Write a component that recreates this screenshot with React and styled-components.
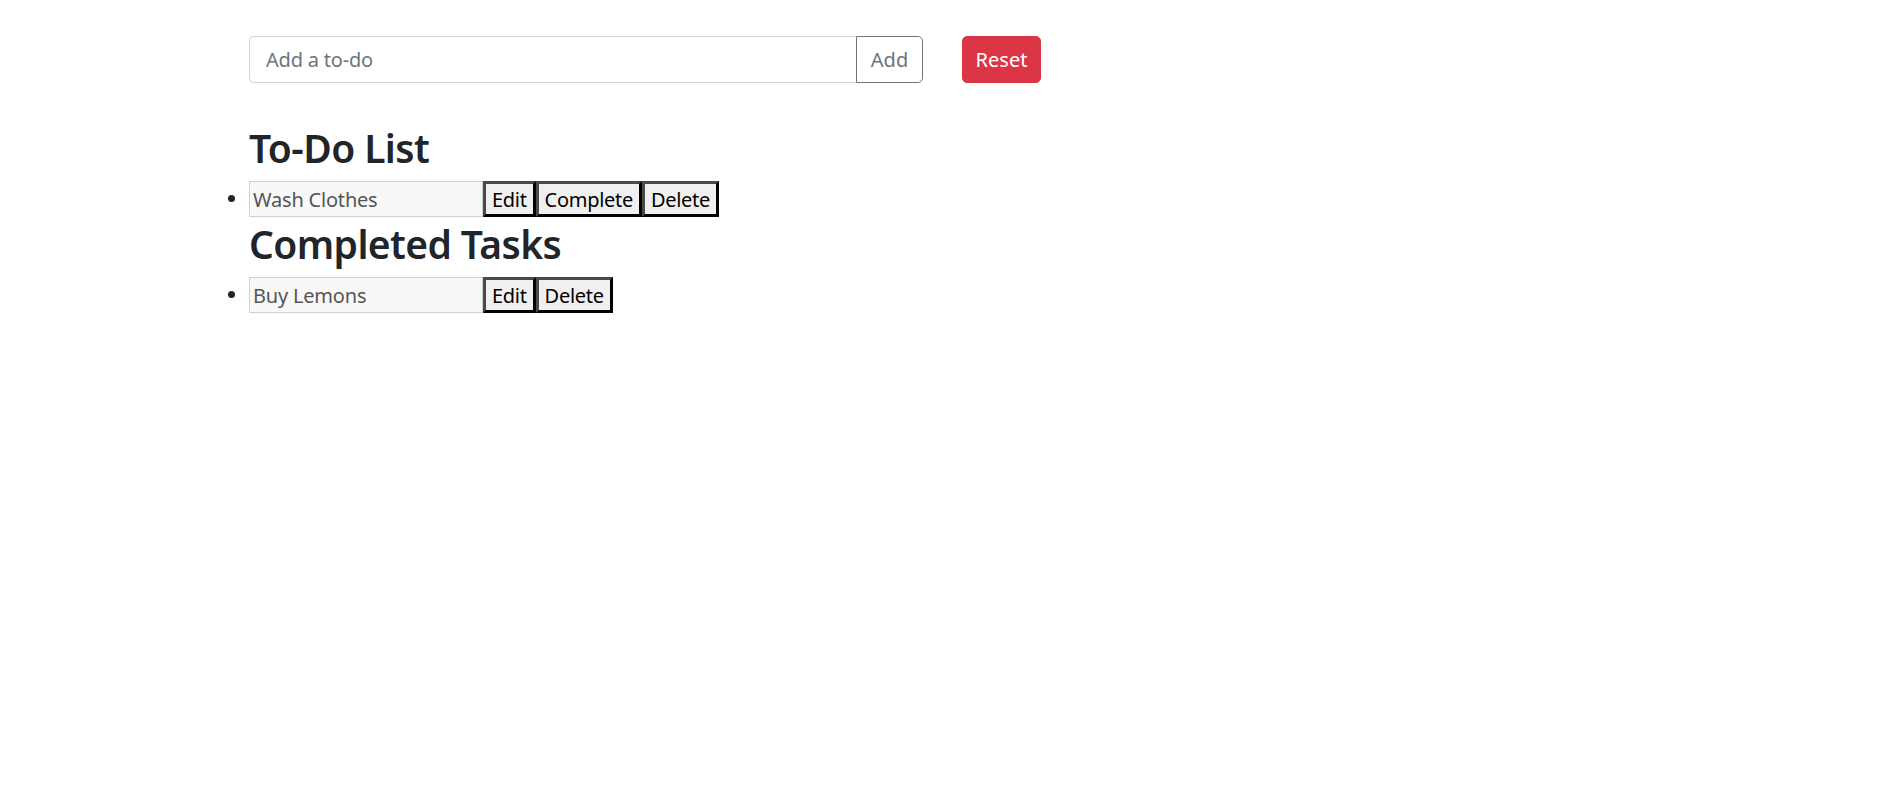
import React from 'react';
import styled, { createGlobalStyle } from 'styled-components';

const GlobalStyle = createGlobalStyle`
    body {
        margin: 0;
        background: #FFFFFF;
        font-family: "Noto Sans", "Open Sans", sans-serif;
        font-size: 20px;
        color: #212529;
    }
`;

const Page = styled.div`
    padding: 36px 0 0 249px;
`;

const Toolbar = styled.form`
    display: flex;
    align-items: stretch;
    height: 47px;
`;

const InputGroup = styled.div`
    display: flex;
    width: 674px;
`;

const TodoInput = styled.input`
    flex: 1;
    min-width: 0;
    box-sizing: border-box;
    padding: 7px 16px;
    font-family: inherit;
    font-size: 20px;
    letter-spacing: -0.2px;
    color: #212529;
    border: 1px solid #ced4da;
    border-right: none;
    border-radius: 5px 0 0 5px;
    outline: none;
    &::placeholder {
        color: #6c757d;
    }
`;

const AddButton = styled.button`
    box-sizing: border-box;
    width: 67px;
    padding: 0;
    font-family: inherit;
    font-size: 20px;
    color: #6c757d;
    background: transparent;
    border: 1px solid #6c757d;
    border-radius: 0 5px 5px 0;
    cursor: pointer;
`;

const ResetButton = styled.button`
    box-sizing: border-box;
    width: 79px;
    margin-left: 39px;
    padding: 0;
    font-family: inherit;
    font-size: 20px;
    color: #FFFFFF;
    background: #dc3545;
    border: 1px solid #dc3545;
    border-radius: 5px;
    cursor: pointer;
`;

const SectionTitle = styled.h2`
    margin: ${({ $gap }) => $gap}px 0 9px;
    font-size: 39px;
    font-weight: 600;
    line-height: 48px;
    letter-spacing: -0.6px;
    color: #212529;
`;

const TaskList = styled.ul`
    margin: 0;
    padding: 0;
    list-style: disc outside;
`;

const TaskItem = styled.li`
    height: 36px;
    line-height: 36px;
`;

const TaskRow = styled.div`
    display: inline-flex;
    vertical-align: top;
    height: 36px;
`;

const TaskText = styled.input`
    box-sizing: border-box;
    width: 234px;
    height: 36px;
    padding: 1px 3px;
    font-family: inherit;
    font-size: 20px;
    letter-spacing: -0.2px;
    color: #555555;
    background: #f8f8f8;
    border: 1px solid #d0d0d0;
    outline: none;
`;

const TaskButton = styled.button`
    box-sizing: border-box;
    height: 36px;
    padding: 0 6px;
    font-family: inherit;
    font-size: 20px;
    letter-spacing: -0.3px;
    color: #000000;
    background: #f0f0f0;
    border: 3px solid;
    border-color: #4a4a4a #000000 #000000 #4a4a4a;
    cursor: pointer;
`;

const todos = [{ id: 1, text: 'Wash Clothes' }];
const completed = [{ id: 2, text: 'Buy Lemons' }];

export default function App() {
    return (
        <>
            <GlobalStyle />
            <Page>
                <Toolbar onSubmit={e => e.preventDefault()}>
                    <InputGroup>
                        <TodoInput placeholder="Add a to-do" />
                        <AddButton type="submit">Add</AddButton>
                    </InputGroup>
                    <ResetButton type="button">Reset</ResetButton>
                </Toolbar>

                <SectionTitle $gap={41}>To-Do List</SectionTitle>
                <TaskList>
                    {todos.map(item => (
                        <TaskItem key={item.id}>
                            <TaskRow>
                                <TaskText defaultValue={item.text} readOnly />
                                <TaskButton>Edit</TaskButton>
                                <TaskButton>Complete</TaskButton>
                                <TaskButton>Delete</TaskButton>
                            </TaskRow>
                        </TaskItem>
                    ))}
                </TaskList>

                <SectionTitle $gap={3}>Completed Tasks</SectionTitle>
                <TaskList>
                    {completed.map(item => (
                        <TaskItem key={item.id}>
                            <TaskRow>
                                <TaskText defaultValue={item.text} readOnly />
                                <TaskButton>Edit</TaskButton>
                                <TaskButton>Delete</TaskButton>
                            </TaskRow>
                        </TaskItem>
                    ))}
                </TaskList>
            </Page>
        </>
    );
}
